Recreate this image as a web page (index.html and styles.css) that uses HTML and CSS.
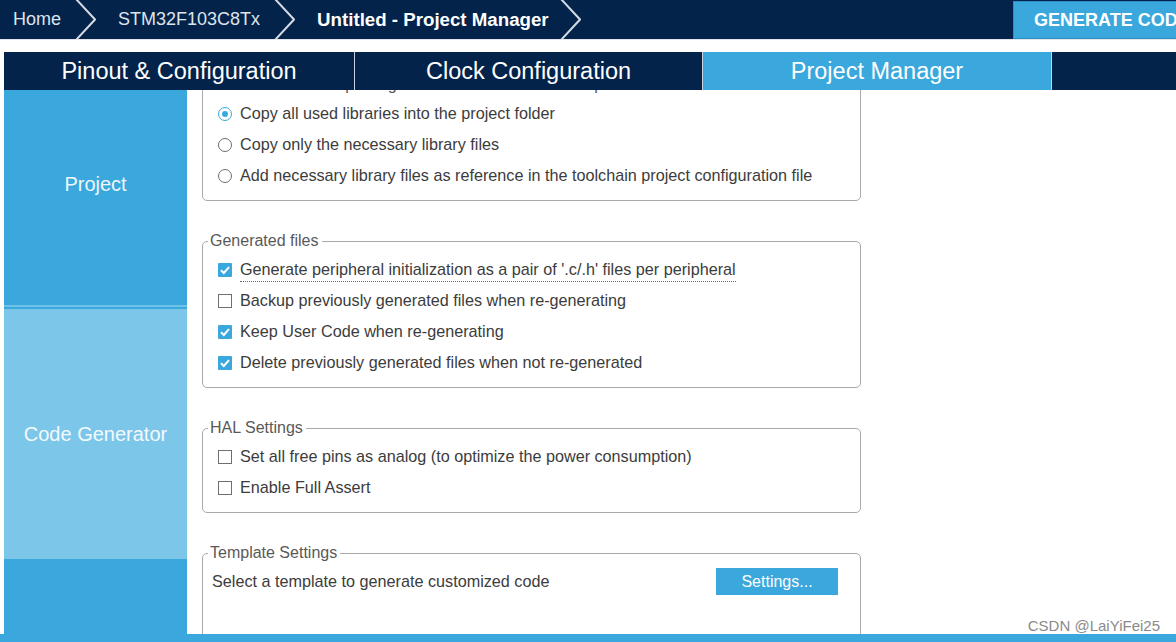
FILE: index.html
```html
<!DOCTYPE html>
<html lang="en">
<head>
<meta charset="utf-8">
<title>Untitled - Project Manager</title>
<link rel="stylesheet" href="styles.css">
</head>
<body>
<div class="app">
  <header class="topbar">
    <nav class="crumbs">
      <span class="crumb first">Home</span>
      <svg class="chev" viewBox="0 0 21 39" width="21" height="39"><polyline points="1,-1 20,19.5 1,40"/></svg>
      <span class="crumb">STM32F103C8Tx</span>
      <svg class="chev" viewBox="0 0 21 39" width="21" height="39"><polyline points="1,-1 20,19.5 1,40"/></svg>
      <span class="crumb current">Untitled - Project Manager</span>
      <svg class="chev" viewBox="0 0 21 39" width="21" height="39"><polyline points="1,-1 20,19.5 1,40"/></svg>
    </nav>
    <button class="generate">GENERATE CODE</button>
  </header>

  <div class="tabs">
    <div class="tab">Pinout &amp; Configuration</div>
    <div class="tab">Clock Configuration</div>
    <div class="tab active">Project Manager</div>
    <div class="tab last"></div>
  </div>

  <div class="main">
    <aside class="sidebar">
      <div class="side-item project">Project</div>
      <div class="side-item codegen">Code Generator</div>
      <div class="side-item advanced">Advanced Settings</div>
    </aside>

    <section class="content">
      <div class="panel">
        <fieldset class="group">
          <legend>STM32Cube MCU packages and embedded software packs</legend>
          <div class="opt"><span class="radio on"></span><span>Copy all used libraries into the project folder</span></div>
          <div class="opt"><span class="radio"></span><span>Copy only the necessary library files</span></div>
          <div class="opt"><span class="radio"></span><span>Add necessary library files as reference in the toolchain project configuration file</span></div>
        </fieldset>

        <fieldset class="group">
          <legend>Generated files</legend>
          <div class="opt"><span class="check on"><svg viewBox="0 0 14 14" width="14" height="14"><polyline points="3,7.3 5.8,10 11,4.2"/></svg></span><span class="focused">Generate peripheral initialization as a pair of '.c/.h' files per peripheral</span></div>
          <div class="opt"><span class="check"></span><span>Backup previously generated files when re-generating</span></div>
          <div class="opt"><span class="check on"><svg viewBox="0 0 14 14" width="14" height="14"><polyline points="3,7.3 5.8,10 11,4.2"/></svg></span><span>Keep User Code when re-generating</span></div>
          <div class="opt"><span class="check on"><svg viewBox="0 0 14 14" width="14" height="14"><polyline points="3,7.3 5.8,10 11,4.2"/></svg></span><span>Delete previously generated files when not re-generated</span></div>
        </fieldset>

        <fieldset class="group">
          <legend>HAL Settings</legend>
          <div class="opt"><span class="check"></span><span>Set all free pins as analog (to optimize the power consumption)</span></div>
          <div class="opt"><span class="check"></span><span>Enable Full Assert</span></div>
        </fieldset>

        <fieldset class="group template">
          <legend>Template Settings</legend>
          <div class="template-row">
            <span>Select a template to generate customized code</span>
            <button class="settings">Settings...</button>
          </div>
        </fieldset>
      </div>
    </section>
  </div>

  <div class="bottombar"></div>
  <div class="watermark">CSDN @LaiYiFei25</div>
</div>
</body>
</html>
```

FILE: styles.css
```css
* { box-sizing: border-box; }

html, body {
  margin: 0;
  padding: 0;
  width: 1176px;
  height: 642px;
  overflow: hidden;
  background: #ffffff;
  font-family: "Liberation Sans", Arial, sans-serif;
}

.app {
  position: relative;
  width: 1176px;
  height: 642px;
  display: flex;
  flex-direction: column;
  overflow: hidden;
}

/* ---------- top bar ---------- */
.topbar {
  flex: 0 0 auto;
  height: 40px;
  background: #03234b;
  border-bottom: 1px solid #e2e6ec;
  display: flex;
  align-items: stretch;
  margin-bottom: 12px;
}

.crumbs {
  flex: 1 1 auto;
  display: flex;
  align-items: center;
  height: 39px;
}

.crumb {
  font-size: 18px;
  color: #dfe4ec;
  padding: 0 14px 0 22px;
  white-space: nowrap;
}
.crumb.first { padding-left: 13px; }
.crumb.current { color: #ffffff; font-weight: bold; font-size: 18.7px; padding-right: 11px; }

.chev { display: block; flex: 0 0 21px; }
.chev polyline {
  fill: none;
  stroke: #d4dae3;
  stroke-width: 2;
}

.generate {
  flex: 0 0 200px;
  margin: 1px -37px 0 0;
  height: 38px;
  border: 1px solid #2d8fc3;
  background: #3aa8dc;
  color: #ffffff;
  font-family: "Liberation Sans", Arial, sans-serif;
  font-weight: bold;
  font-size: 18px;
  text-align: left;
  padding: 0 0 0 20px;
  white-space: nowrap;
}

/* ---------- tabs ---------- */
.tabs {
  flex: 0 0 38px;
  margin-left: 4px;
  display: grid;
  grid-template-columns: 351px 348px 349px 1fr;
}

.tab {
  background: #03234b;
  color: #ffffff;
  font-size: 23.5px;
  display: flex;
  align-items: center;
  justify-content: center;
  border-right: 1px solid #c7d0dc;
  white-space: nowrap;
}
.tab.active { background: #3aa8dc; }
.tab.last { border-right: none; }

/* ---------- main ---------- */
.main {
  flex: 1 1 auto;
  display: flex;
  min-height: 0;
  overflow: hidden;
}

.sidebar {
  flex: 0 0 183px;
  margin-left: 4px;
  display: flex;
  flex-direction: column;
  overflow: hidden;
}

.side-item {
  flex: 0 0 auto;
  display: flex;
  align-items: center;
  justify-content: center;
  font-size: 20px;
  color: #eef7fc;
  background: #3aa8dc;
}

.side-item.project {
  height: 217px;
  padding-bottom: 26px;
  border-bottom: 2px solid #6ec1e8;
}

.side-item.codegen {
  height: 252px;
  border-top: 2px solid #3aa8dc;
  background: #7cc6e9;
  color: #f3fafd;
}

.side-item.advanced {
  height: 250px;
}

.content {
  flex: 1 1 auto;
  overflow: hidden;
  padding-left: 15px;
}

.panel {
  width: 659px;
  margin-top: -14px;
  display: flex;
  flex-direction: column;
  gap: 31px;
}

.group {
  margin: 0;
  width: 659px;
  min-width: 0;
  border: 1px solid #a9a9a9;
  border-radius: 5px;
  padding: 4px 10px 9px 5px;
}

.group legend {
  font-size: 16px;
  line-height: 18px;
  color: #595959;
  padding: 0 3px 0 2px;
  white-space: nowrap;
}

.opt {
  height: 31px;
  display: flex;
  align-items: center;
  gap: 8px;
  padding-left: 10px;
  font-size: 16.2px;
  color: #3c3c3c;
  white-space: nowrap;
}

.focused {
  border-bottom: 1px dotted #6a6a6a;
  padding-bottom: 2px;
  margin-top: 3px;
}

.radio {
  flex: 0 0 14px;
  width: 14px;
  height: 14px;
  border-radius: 50%;
  border: 1px solid #6f6f6f;
  background: #ffffff;
  display: flex;
  align-items: center;
  justify-content: center;
}
.radio.on { border: 1.5px solid #3aa8dc; }
.radio.on::after {
  content: "";
  width: 6px;
  height: 6px;
  border-radius: 50%;
  background: #3aa8dc;
}

.check {
  flex: 0 0 14px;
  width: 14px;
  height: 14px;
  border: 1px solid #6f6f6f;
  background: #ffffff;
  display: block;
}
.check.on {
  border: none;
  background: #3aa8dc;
  border-radius: 1px;
}
.check svg { display: block; }
.check polyline {
  fill: none;
  stroke: #ffffff;
  stroke-width: 2;
}

.group.template { padding-bottom: 70px; }

.template-row {
  height: 31px;
  display: flex;
  align-items: center;
  justify-content: space-between;
  padding-left: 4px;
  padding-right: 12px;
  font-size: 16.2px;
  color: #3c3c3c;
  white-space: nowrap;
}

.settings {
  width: 122px;
  height: 27px;
  border: none;
  background: #3aa8dc;
  color: #ffffff;
  font-family: "Liberation Sans", Arial, sans-serif;
  font-size: 16px;
  padding: 0;
}

.bottombar {
  flex: 0 0 8px;
  background: #3aa8dc;
}

.watermark {
  position: absolute;
  right: 16px;
  bottom: 7px;
  font-size: 15px;
  line-height: 18px;
  color: #8a8a8a;
  text-shadow: 0 0 2px #ffffff;
}
```
